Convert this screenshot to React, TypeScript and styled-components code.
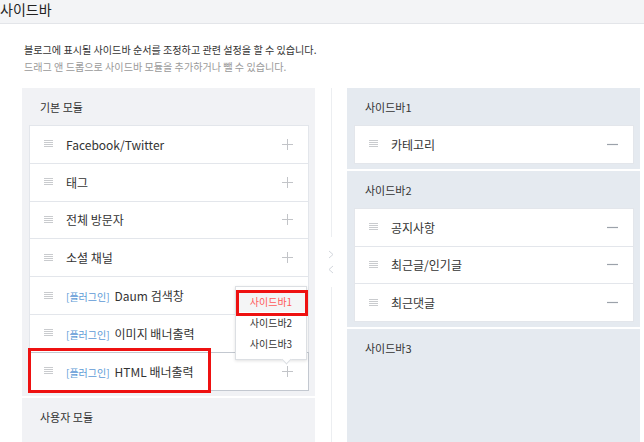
import React from 'react';
import styled, { createGlobalStyle } from 'styled-components';

const GlobalStyle = createGlobalStyle`
  body {
    margin: 0;
    background: #fff;
    font-family: "Noto Sans CJK KR", "Noto Sans", sans-serif;
    color: #333;
  }
`;

const Header = styled.div`
  height: 23px;
  background: #f3f4f6;
  border-bottom: 1px solid #e3e5e9;
  font-size: 14px;
  line-height: 18px;
  color: #222;
`;

const Content = styled.div`
  padding: 17px 0 0 22px;
`;

const Desc = styled.p<{ $muted?: boolean }>`
  margin: 0 0 0 2px;
  font-size: 10.1px;
  line-height: 17px;
  color: ${(p) => (p.$muted ? '#9a9a9a' : '#333')};
`;

const Columns = styled.div`
  display: grid;
  grid-template-columns: 293px 32px 293px;
  margin-top: 13px;
`;

const Column = styled.div`
  display: flex;
  flex-direction: column;
  gap: 2px;
`;

const Panel = styled.div<{ $tone: 'gray' | 'blue'; $minHeight?: number }>`
  background: ${(p) => (p.$tone === 'blue' ? '#e5eaf0' : '#f1f2f5')};
  padding: 0 6px 5px 7px;
  min-height: ${(p) => p.$minHeight ?? 0}px;
`;

const PanelTitle = styled.div`
  height: 37px;
  line-height: 39px;
  padding-left: 11px;
  font-size: 11px;
  color: #333;
`;

const List = styled.div`
  display: flex;
  flex-direction: column;
`;

const Item = styled.div<{ $hover?: boolean }>`
  position: relative;
  z-index: ${(p) => (p.$hover ? 1 : 0)};
  box-sizing: border-box;
  height: 38.8px;
  margin-top: -1px;
  &:first-child {
    margin-top: 0;
  }
  display: flex;
  align-items: center;
  padding: 0 15px 0 14px;
  background: #fff;
  border: 1px solid ${(p) => (p.$hover ? '#c3c8d0' : '#e3e6eb')};
  font-size: 12px;
  color: #333;
`;

const Handle = styled.svg`
  flex: none;
  margin-right: 13px;
`;

const Label = styled.span`
  flex: 1;
  white-space: nowrap;
`;

const Plugin = styled.span`
  font-size: 10px;
  color: #5d9ad6;
  margin-right: 5px;
`;

const Middle = styled.div`
  display: flex;
  flex-direction: column;
  align-items: center;
`;

const Line = styled.div<{ $h?: number }>`
  width: 1px;
  background: #eceef1;
  ${(p) => (p.$h ? `height: ${p.$h}px;` : 'flex: 1;')}
`;

const Toggle = styled.div`
  height: 50px;
  display: flex;
  align-items: center;
  justify-content: center;
`;

const Popup = styled.div`
  position: absolute;
  right: 1px;
  top: -67px;
  width: 72px;
  box-sizing: border-box;
  padding: 4px 0 5px;
  background: #fff;
  border: 1px solid #dcdfe3;
  box-shadow: 0 1px 3px rgba(0, 0, 0, 0.12);
  z-index: 3;
  &::after {
    content: '';
    position: absolute;
    right: 16px;
    bottom: -4px;
    width: 6px;
    height: 6px;
    background: #fff;
    border-right: 1px solid #dcdfe3;
    border-bottom: 1px solid #dcdfe3;
    transform: rotate(45deg);
  }
`;

const PopupItem = styled.div<{ $active?: boolean }>`
  position: relative;
  height: 21px;
  line-height: 21px;
  text-align: center;
  font-size: 10px;
  color: ${(p) => (p.$active ? '#ff5b5b' : '#333')};
  background: ${(p) => (p.$active ? '#f4f5f6' : 'transparent')};
`;

const RedBox = styled.div<{ $l: number; $t: number; $w: number; $h: number }>`
  position: absolute;
  left: ${(p) => p.$l}px;
  top: ${(p) => p.$t}px;
  width: ${(p) => p.$w}px;
  height: ${(p) => p.$h}px;
  box-sizing: border-box;
  border: 3px solid #ee1111;
  pointer-events: none;
  z-index: 4;
`;

const DragIcon = () => (
  <Handle width="9" height="8" viewBox="0 0 9 8">
    {[0.5, 2.5, 4.5, 6.5].map((y) => (
      <line key={y} x1="0" y1={y} x2="9" y2={y} stroke="#c9cbce" strokeWidth="1" />
    ))}
  </Handle>
);

const PlusIcon = () => (
  <svg width="11" height="11" viewBox="0 0 11 11">
    <path d="M5.5 0V11M0 5.5H11" stroke="#c2c4c8" strokeWidth="1" />
  </svg>
);

const MinusIcon = () => (
  <svg width="11" height="3" viewBox="0 0 11 3">
    <path d="M0 1.5H11" stroke="#9ca2aa" strokeWidth="1.2" />
  </svg>
);

type Mod = { name: string; plugin?: boolean };

const basic: Mod[] = [
  { name: 'Facebook/Twitter' },
  { name: '태그' },
  { name: '전체 방문자' },
  { name: '소셜 채널' },
  { name: 'Daum 검색창', plugin: true },
  { name: '이미지 배너출력', plugin: true },
  { name: 'HTML 배너출력', plugin: true },
];

const sidebars: { title: string; items: string[]; minHeight?: number }[] = [
  { title: '사이드바1', items: ['카테고리'] },
  { title: '사이드바2', items: ['공지사항', '최근글/인기글', '최근댓글'] },
  { title: '사이드바3', items: [], minHeight: 120 },
];

export default function App() {
  return (
    <>
      <GlobalStyle />
      <Header>사이드바</Header>
      <Content>
        <Desc>블로그에 표시될 사이드바 순서를 조정하고 관련 설정을 할 수 있습니다.</Desc>
        <Desc $muted>드래그 앤 드롭으로 사이드바 모듈을 추가하거나 뺄 수 있습니다.</Desc>
        <Columns>
          <Column>
            <Panel $tone="gray">
              <PanelTitle>기본 모듈</PanelTitle>
              <List>
                {basic.map((m, i) => {
                  const last = i === basic.length - 1;
                  return (
                    <Item key={m.name} $hover={last}>
                      <DragIcon />
                      <Label>
                        {m.plugin && <Plugin>[플러그인]</Plugin>}
                        {m.name}
                      </Label>
                      <PlusIcon />
                      {last && (
                        <>
                          <Popup>
                            <PopupItem $active>사이드바1</PopupItem>
                            <PopupItem>사이드바2</PopupItem>
                            <PopupItem>사이드바3</PopupItem>
                          </Popup>
                          <RedBox $l={-2} $t={-5} $w={183} $h={45} />
                          <RedBox $l={206} $t={-63} $w={72} $h={26} />
                        </>
                      )}
                    </Item>
                  );
                })}
              </List>
            </Panel>
            <Panel $tone="gray" $minHeight={60}>
              <PanelTitle>사용자 모듈</PanelTitle>
            </Panel>
          </Column>
          <Middle>
            <Line $h={149} />
            <Toggle>
              <svg width="6" height="24" viewBox="0 0 6 24">
                <path d="M1 1L5 4.5L1 8" fill="none" stroke="#d3d7dd" strokeWidth="1" />
                <path d="M5 16L1 19.5L5 23" fill="none" stroke="#d3d7dd" strokeWidth="1" />
              </svg>
            </Toggle>
            <Line />
          </Middle>
          <Column>
            {sidebars.map((s) => (
              <Panel key={s.title} $tone="blue" $minHeight={s.minHeight}>
                <PanelTitle>{s.title}</PanelTitle>
                <List>
                  {s.items.map((it) => (
                    <Item key={it}>
                      <DragIcon />
                      <Label>{it}</Label>
                      <MinusIcon />
                    </Item>
                  ))}
                </List>
              </Panel>
            ))}
          </Column>
        </Columns>
      </Content>
    </>
  );
}
